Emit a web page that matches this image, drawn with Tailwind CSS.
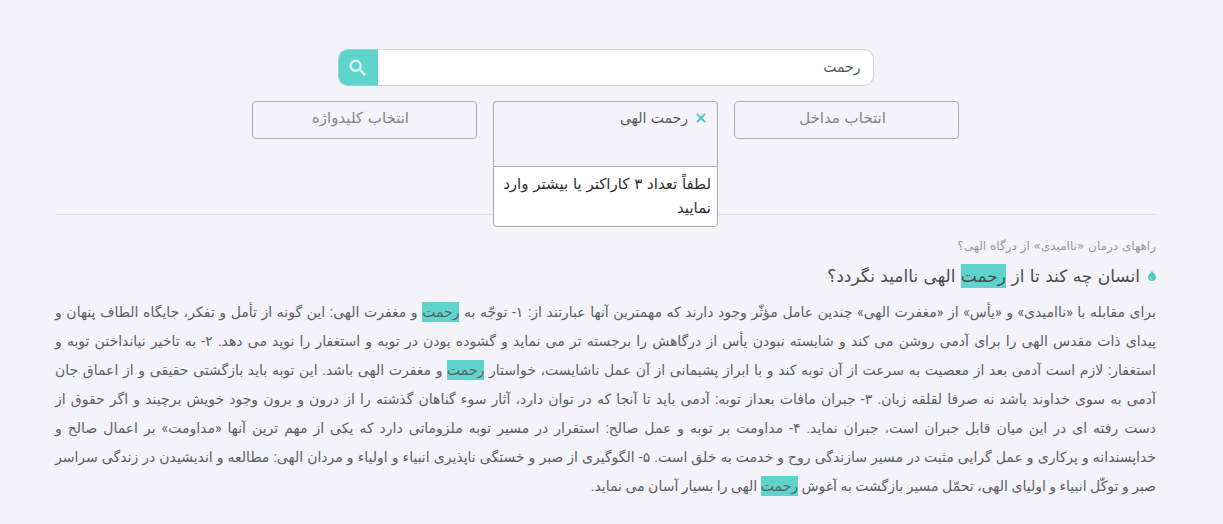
<!DOCTYPE html>
<html lang="fa" dir="rtl">
<head>
    <meta charset="UTF-8">
    <meta name="viewport" content="width=device-width, initial-scale=1.0">
    <title>جستجو: رحمت</title>
    <script src="https://cdn.jsdelivr.net/npm/@tailwindcss/browser@4"></script>
</head>
<body class="min-h-screen bg-[#f4f3fa] pt-[49px] pr-[67px] pl-[55px] font-['DejaVu_Sans',sans-serif] text-[#55565c]">
    <!-- جستجو -->
    <form class="mx-auto flex h-[37px] max-w-[536px]">
        <input type="text" aria-label="جستجو" value="رحمت" class="min-w-0 flex-1 rounded-r-[10px] border border-l-0 border-[#d3d3d9] bg-white px-3 pb-[2px] text-sm outline-none">
        <button type="button" aria-label="جستجو" class="flex w-10 items-center justify-center rounded-l-[10px] border border-r-0 border-[#8fd8d6] bg-[#5fd4cc]">
            <svg class="size-[22px] text-[#e0f8f7]" viewBox="0 0 24 24" fill="currentColor" stroke="currentColor" stroke-width=".6"><path d="M15.5 14h-.79l-.28-.27A6.47 6.47 0 0 0 16 9.5 6.5 6.5 0 1 0 9.5 16c1.61 0 3.09-.59 4.23-1.57l.27.28v.79l5 4.99L20.49 19l-4.99-5zm-6 0C7.01 14 5 11.99 5 9.5S7.01 5 9.5 5 14 7.01 14 9.5 11.99 14 9.5 14z"/></svg>
        </button>
    </form>

    <!-- فیلترها -->
    <div class="mx-auto mt-[15px] grid max-w-[707px] grid-cols-3 items-start gap-4">
        <input type="text" aria-label="انتخاب مداخل" placeholder="انتخاب مداخل" class="h-[38px] min-w-0 rounded-[4px] border border-[#aaaaaf] pr-2 pb-1 text-center text-[15px] placeholder:text-[#85858a]">
        <div class="relative h-[65px] rounded-t-[4px] border border-b-0 border-[#aaaaaf]">
            <div class="flex h-8 items-center gap-2 pr-[11px] text-sm">
                <button type="button" aria-label="حذف" class="text-[#4cc9bf]">
                    <svg class="size-[10px]" viewBox="0 0 10 10" fill="none" stroke="currentColor" stroke-width="2"><path d="M1 1l8 8M9 1L1 9"/></svg>
                </button>
                <span>رحمت الهی</span>
            </div>
            <div class="absolute -inset-x-px top-full rounded-b-[4px] border border-[#aaaaaf] bg-white px-[6px] pt-[5px] pb-[6px] text-[15px] leading-6 text-[#2e2f35]">لطفاً تعداد ۳ کاراکتر یا بیشتر وارد نمایید</div>
        </div>
        <input type="text" aria-label="انتخاب کلیدواژه" placeholder="انتخاب کلیدواژه" class="h-[38px] min-w-0 rounded-[4px] border border-[#aaaaaf] pr-2 pb-1 text-center text-[15px] placeholder:text-[#85858a]">
    </div>

    <!-- نتیجه -->
    <article class="mt-12 border-t border-[#dfdfe6] pt-[21px]">
        <p class="text-xs leading-5 text-[#97979d]">راههای درمان «ناامیدی» از درگاه الهی؟</p>
        <h2 class="mt-2 flex items-center gap-2 text-[17px] leading-6 text-[#4a4b50]">
            <svg class="h-[10px] w-2" viewBox="0 0 8 10"><path d="M4 0C5.200 2 8 3.800 8 6.300A4 3.700 0 0 1 0 6.300C0 3.800 2.800 2 4 0z" fill="#4cc9c0"/><path d="M2 6.200c0 1.300 1 2.100 2.200 2.100" fill="none" stroke="#b5ebe7"/></svg>
            <span>انسان چه کند تا از <mark class="bg-[#5fd4cc] py-[2px] text-inherit">رحمت</mark> الهی ناامید نگردد؟</span>
        </h2>
        <!-- هر سطر تراز دوطرفه دارد -->
        <div class="mt-[10px] font-[Roboto,'DejaVu_Sans',sans-serif] text-sm leading-[29px] text-[#5d5e64]">
            <p class="[text-align-last:justify]">برای مقابله با «ناامیدی» و «یأس» از «مغفرت الهی» چندین عامل مؤثّر وجود دارند که مهمترین آنها عبارتند از: ۱- توجّه به <mark class="bg-[#5fd4cc] py-[2px] text-inherit">رحمت</mark> و مغفرت الهی: این گونه از تأمل و تفکر، جایگاه الطاف پنهان و</p>
            <p class="[text-align-last:justify]">پیدای ذات مقدس الهی را برای آدمی روشن می کند و شایسته نبودن یأس از درگاهش را برجسته تر می نماید و گشوده بودن در توبه و استغفار را نوید می دهد. ۲- به تاخیر نیانداختن توبه و</p>
            <p class="[text-align-last:justify]">استغفار: لازم است آدمی بعد از معصیت به سرعت از آن توبه کند و با ابراز پشیمانی از آن عمل ناشایست، خواستار <mark class="bg-[#5fd4cc] py-[2px] text-inherit">رحمت</mark> و مغفرت الهی باشد. این توبه باید بازگشتی حقیقی و از اعماق جان</p>
            <p class="[text-align-last:justify]">آدمی به سوی خداوند باشد نه صرفا لقلقه زبان. ۳- جبران مافات بعداز توبه: آدمی باید تا آنجا که در توان دارد، آثار سوء گناهان گذشته را از درون و برون وجود خویش برچیند و اگر حقوق از</p>
            <p class="[text-align-last:justify]">دست رفته ای در این میان قابل جبران است، جبران نماید. ۴- مداومت بر توبه و عمل صالح: استقرار در مسیر توبه ملزوماتی دارد که یکی از مهم ترین آنها «مداومت» بر اعمال صالح و</p>
            <p class="[text-align-last:justify]">خداپسندانه و پرکاری و عمل گرایی مثبت در مسیر سازندگی روح و خدمت به خلق است. ۵- الگوگیری از صبر و خستگی ناپذیری انبیاء و اولیاء و مردان الهی: مطالعه و اندیشیدن در زندگی سراسر</p>
            <p>صبر و توکّل انبیاء و اولیای الهی، تحمّل مسیر بازگشت به آغوش <mark class="bg-[#5fd4cc] py-[2px] text-inherit">رحمت</mark> الهی را بسیار آسان می نماید.</p>
        </div>
    </article>
</body>
</html>
